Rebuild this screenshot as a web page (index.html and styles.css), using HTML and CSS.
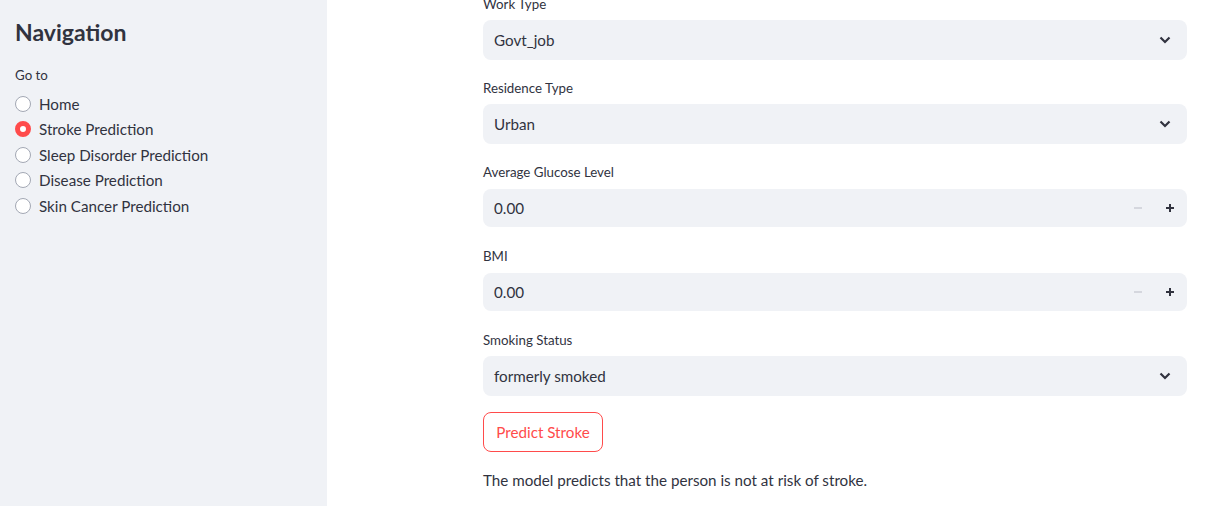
FILE: index.html
```html
<!DOCTYPE html>
<html lang="en">
<head>
<meta charset="utf-8">
<title>Stroke Prediction</title>
<link rel="stylesheet" href="styles.css">
</head>
<body>
<div class="app">
  <aside class="sidebar">
    <h2 class="side-title">Navigation</h2>
    <div class="radio-label">Go to</div>
    <div class="radio-group">
      <label class="radio"><span class="dot"></span><span>Home</span></label>
      <label class="radio checked"><span class="dot"></span><span>Stroke Prediction</span></label>
      <label class="radio"><span class="dot"></span><span>Sleep Disorder Prediction</span></label>
      <label class="radio"><span class="dot"></span><span>Disease Prediction</span></label>
      <label class="radio"><span class="dot"></span><span>Skin Cancer Prediction</span></label>
    </div>
  </aside>
  <main class="main">
    <div class="block">
      <div class="field">
        <div class="label">Work Type</div>
        <div class="select"><span>Govt_job</span>
          <svg class="chev" width="12" height="8" viewBox="0 0 12 8"><path d="M1.5 1.5 L6 6 L10.5 1.5" fill="none" stroke="#31333f" stroke-width="2.2"/></svg>
        </div>
      </div>
      <div class="field">
        <div class="label">Residence Type</div>
        <div class="select"><span>Urban</span>
          <svg class="chev" width="12" height="8" viewBox="0 0 12 8"><path d="M1.5 1.5 L6 6 L10.5 1.5" fill="none" stroke="#31333f" stroke-width="2.2"/></svg>
        </div>
      </div>
      <div class="field">
        <div class="label">Average Glucose Level</div>
        <div class="number"><span class="num-val">0.00</span>
          <span class="step minus"><svg width="10" height="10" viewBox="0 0 10 10"><path d="M1 5 H9" stroke="#d5d7de" stroke-width="2"/></svg></span>
          <span class="step plus"><svg width="10" height="10" viewBox="0 0 10 10"><path d="M1 5 H9 M5 1 V9" stroke="#31333f" stroke-width="2"/></svg></span>
        </div>
      </div>
      <div class="field">
        <div class="label">BMI</div>
        <div class="number"><span class="num-val">0.00</span>
          <span class="step minus"><svg width="10" height="10" viewBox="0 0 10 10"><path d="M1 5 H9" stroke="#d5d7de" stroke-width="2"/></svg></span>
          <span class="step plus"><svg width="10" height="10" viewBox="0 0 10 10"><path d="M1 5 H9 M5 1 V9" stroke="#31333f" stroke-width="2"/></svg></span>
        </div>
      </div>
      <div class="field">
        <div class="label">Smoking Status</div>
        <div class="select"><span>formerly smoked</span>
          <svg class="chev" width="12" height="8" viewBox="0 0 12 8"><path d="M1.5 1.5 L6 6 L10.5 1.5" fill="none" stroke="#31333f" stroke-width="2.2"/></svg>
        </div>
      </div>
      <div class="btn-row"><button class="btn">Predict Stroke</button></div>
      <p class="result">The model predicts that the person is not at risk of stroke.</p>
    </div>
  </main>
</div>
</body>
</html>
```
FILE: styles.css
```css
* { box-sizing: border-box; }
html, body { margin: 0; padding: 0; height: 100%; overflow: hidden; }
body {
  font-family: "Lato", "Liberation Sans", sans-serif;
  color: #31333f;
  background: #fff;
}
.app { display: flex; height: 506px; }
.sidebar {
  width: 327px;
  flex: none;
  background: #f0f2f6;
  padding: 16px 15px;
}
.side-title {
  margin: 0;
  font-size: 23px;
  font-weight: 700;
  line-height: 32px;
}
.radio-label {
  margin-top: 19px;
  font-size: 13.3px;
  line-height: 16px;
}
.radio-group { margin-top: 8px; display: flex; flex-direction: column; }
.radio {
  display: flex;
  align-items: center;
  gap: 8px;
  height: 25.5px;
  font-size: 15.2px;
}
.dot {
  width: 16px; height: 16px;
  border-radius: 50%;
  border: 1px solid #a3a8b4;
  background: #fff;
  flex: none;
}
.radio.checked .dot {
  border: 5px solid #ff4b4b;
  background: #fff;
}
.main { flex: 1; padding-left: 156px; padding-right: 24px; }
.block { width: 704px; margin-top: -8px; display: flex; flex-direction: column; gap: 16px; }
.field { display: flex; flex-direction: column; }
.label { font-size: 13.3px; line-height: 24px; height: 24px; margin-bottom: 4px; }
.select {
  height: 40px;
  background: #f0f2f6;
  border-radius: 8px;
  display: flex;
  align-items: center;
  justify-content: space-between;
  padding: 0 16px 0 11px;
  font-size: 15.2px;
}
.number {
  height: 38px;
  margin: 1px 0;
  background: #f0f2f6;
  border-radius: 8px;
  display: flex;
  align-items: center;
  padding: 0 1px 0 11px;
  font-size: 15.2px;
}
.num-val { flex: 1; }
.step { width: 32px; height: 36px; display: flex; align-items: center; justify-content: center; }
.btn-row { display: flex; }
.btn {
  height: 40px;
  width: 120px;
  border: 1px solid #ff4b4b;
  border-radius: 8px;
  background: #fff;
  color: #ff4b4b;
  font-family: inherit;
  font-size: 15.2px;
  padding: 0;
}
.result { margin: 0; font-size: 15.2px; line-height: 24px; }
```
